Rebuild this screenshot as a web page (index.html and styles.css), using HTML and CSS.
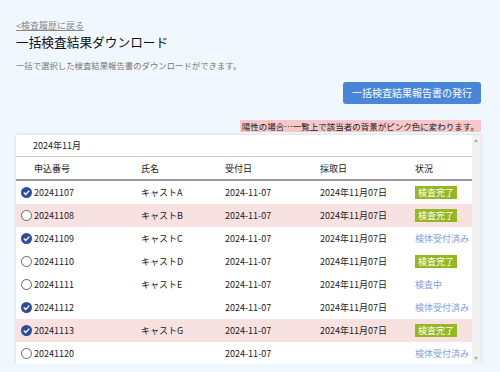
FILE: index.html
```html
<!DOCTYPE html>
<html lang="ja">
<head>
	<meta charset="UTF-8">
	<title>一括検査結果ダウンロード</title>
	<link rel="stylesheet" href="styles.css">
</head>
<body>
	<a class="back" href="#">&lt;検査履歴に戻る</a>
	<h1>一括検査結果ダウンロード</h1>
	<p class="lead">一括で選択した検査結果報告書のダウンロードができます。</p>

	<div class="actions">
		<button class="btn">一括検査結果報告書の発行</button>
	</div>
	<div class="notice-wrap">
		<span class="notice">陽性の場合…一覧上で該当者の背景がピンク色に変わります。</span>
	</div>

	<div class="card">
		<div class="list">
			<div class="month">2024年11月</div>
			<table>
				<colgroup>
					<col class="c-no"><col class="c-name"><col class="c-date"><col class="c-date"><col>
				</colgroup>
				<thead>
					<tr><th class="no">申込番号</th><th>氏名</th><th>受付日</th><th>採取日</th><th>状況</th></tr>
				</thead>
				<tbody id="rows"></tbody>
			</table>
		</div>
		<div class="scroll"><i class="up"></i><i class="down"></i></div>
	</div>

	<script>
		var data = [
			['20241107', 'キャストA', true, false, '2024年11月07日', 'done'],
			['20241108', 'キャストB', false, true, '2024年11月07日', 'done'],
			['20241109', 'キャストC', true, false, '2024年11月07日', 'recv'],
			['20241110', 'キャストD', false, false, '2024年11月07日', 'done'],
			['20241111', 'キャストE', false, false, '2024年11月07日', 'wip'],
			['20241112', '', true, false, '2024年11月07日', 'recv'],
			['20241113', 'キャストG', true, true, '2024年11月07日', 'done'],
			['20241120', '', false, false, '', 'recv']
		];

		var on = '<svg class="chk" width="11" height="11" viewBox="0 0 11 11"><circle cx="5.5" cy="5.5" r="5.5" fill="#2c4b9c"/><path d="M2.8 5.6 4.7 7.5 8.3 3.6" fill="none" stroke="#fff" stroke-width="1.4"/></svg>',
			off = '<svg class="chk" width="11" height="11" viewBox="0 0 11 11"><circle cx="5.5" cy="5.5" r="5" fill="#fff" stroke="#555" stroke-width="0.9"/></svg>',
			state = {
				done: '<span class="badge">検査完了</span>',
				recv: '<a class="link" href="#">検体受付済み</a>',
				wip: '<a class="link" href="#">検査中</a>'
			};

		var html = '';

		data.forEach(function (r) {
			html += '<tr' + (r[3] ? ' class="positive"' : '') + '>'
				+ '<td class="no">' + (r[2] ? on : off) + r[0] + '</td>'
				+ '<td>' + r[1] + '</td>'
				+ '<td>2024-11-07</td>'
				+ '<td>' + r[4] + '</td>'
				+ '<td>' + state[r[5]] + '</td></tr>';
		});

		document.getElementById('rows').innerHTML = html;
	</script>
</body>
</html>
```

FILE: styles.css
```css
html, body {
	margin: 0;
}

body {
	padding: 20px 19px 0 16px;
	background: #f0f7fe;
	color: #222;
	font-family: "Noto Sans CJK JP", "Noto Sans", sans-serif;
}

.back {
	display: block;
	font-size: 9px;
	line-height: 12px;
	color: #888;
}

h1 {
	margin: 1px 0 0;
	font-size: 12.7px;
	line-height: 18px;
	font-weight: 400;
	color: #111;
}

.lead {
	margin: 8px 0 0;
	font-size: 8.4px;
	line-height: 12px;
	color: #777;
}

.actions {
	display: flex;
	justify-content: flex-end;
	margin-top: 11px;
}

.btn {
	width: 138px;
	height: 22px;
	padding: 0;
	border: 0;
	border-radius: 3px;
	background: #4a86d8;
	color: #fff;
	font: 10px/22px "Noto Sans CJK JP", sans-serif;
}

.notice-wrap {
	display: flex;
	justify-content: flex-end;
	margin-top: 16px;
}

.notice {
	padding: 0 2px;
	background: #f6c8c8;
	font-size: 8.5px;
	line-height: 12px;
	color: #222;
}

.card {
	display: flex;
	margin-top: 3px;
	height: 229px;
	background: #fff;
	box-shadow: 0 0 3px rgba(0, 0, 0, .15);
}

.list {
	flex: 1;
	overflow: hidden;
}

.month {
	height: 21px;
	padding-left: 17px;
	font-size: 9px;
	line-height: 21px;
	border-bottom: 1px solid #c8c8c8;
}

table {
	width: 100%;
	border-collapse: collapse;
	table-layout: fixed;
	font-size: 9px;
}

.c-no { width: 125px; }
.c-name { width: 84px; }
.c-date { width: 95px; }

th {
	height: 22px;
	padding: 0;
	text-align: left;
	font-weight: 400;
	border-bottom: 2px solid #999;
}

td {
	height: 23px;
	padding: 0;
	white-space: nowrap;
}

th.no {
	padding-left: 18px;
}

td.no {
	padding-left: 5px;
}

.chk {
	margin-right: 2px;
	vertical-align: -2px;
}

.positive {
	background: #f8e1e1;
}

.badge {
	display: inline-block;
	padding: 0 3px;
	background: #94b824;
	color: #fff;
	line-height: 13px;
}

.link {
	color: #7ea2e2;
	text-decoration: none;
}

.scroll {
	position: relative;
	width: 9px;
	background: #f1f1f1;
}

.scroll i {
	position: absolute;
	left: 2px;
	border-left: 2.5px solid transparent;
	border-right: 2.5px solid transparent;
}

.scroll .up {
	top: 4px;
	border-bottom: 3px solid #aaa;
}

.scroll .down {
	bottom: 4px;
	border-top: 3px solid #aaa;
}
```
